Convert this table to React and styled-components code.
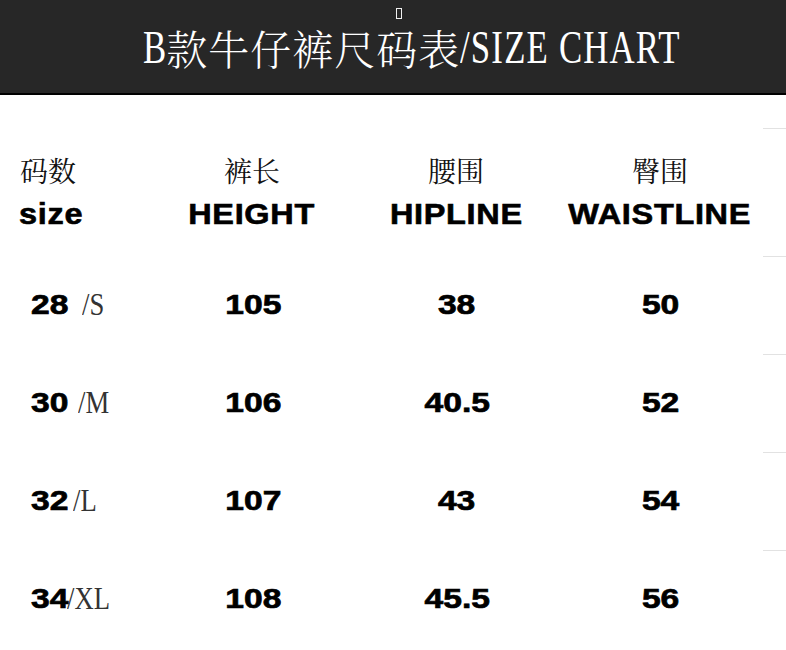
import React from "react";
import styled, { createGlobalStyle } from "styled-components";

const rows = [
    { size: "28", tag: "/S", shift: 20, height: "105", hip: "38", waist: "50" },
    { size: "30", tag: "/M", shift: 16, height: "106", hip: "40.5", waist: "52" },
    { size: "32", tag: "/L", shift: 11, height: "107", hip: "43", waist: "54" },
    { size: "34", tag: "/XL", shift: 5, height: "108", hip: "45.5", waist: "56" },
];

const heads = [
    { cn: "裤长", en: "HEIGHT" },
    { cn: "腰围", en: "HIPLINE" },
    { cn: "臀围", en: "WAISTLINE" },
];

const App = () => {
    return (
        <>
            <Global />
            <Banner>
                <Tofu />
                <Title>
                    <Latin $trim={8}>B</Latin>
                    <Han>款牛仔裤尺码表</Han>
                    <Latin $trim={75} $wide>/SIZE CHART</Latin>
                </Title>
            </Banner>
            <Chart>
                <HeadCell $left>
                    <CnLabel $pad={20}>码数</CnLabel>
                    <EnLabel $left>size</EnLabel>
                </HeadCell>
                {heads.map((h) => (
                    <HeadCell key={h.en}>
                        <CnLabel>{h.cn}</CnLabel>
                        <EnLabel>{h.en}</EnLabel>
                    </HeadCell>
                ))}
                <Tick />

                {rows.map((r) => (
                    <React.Fragment key={r.size}>
                        <Cell $left>
                            <Num $left>{r.size}</Num>
                            <SizeTag $shift={r.shift}>{r.tag}</SizeTag>
                        </Cell>
                        <Cell><Num>{r.height}</Num></Cell>
                        <Cell><Num>{r.hip}</Num></Cell>
                        <Cell><Num>{r.waist}</Num></Cell>
                        <Tick />
                    </React.Fragment>
                ))}
            </Chart>
        </>
    );
};

const Global = createGlobalStyle`
    body{
        margin: 0;
        background: #ffffff;
        font-family: "Liberation Sans", "Noto Sans CJK SC", sans-serif;
    }
`;

const Banner = styled.header`
    position: relative;
    height: 93px;
    background: #272727;
    border-bottom: 2px solid #000;
    display: flex;
    align-items: center;
    padding-left: 143px;
    box-sizing: content-box;
`;

const Tofu = styled.span`
    position: absolute;
    left: 396px;
    top: 8px;
    width: 4px;
    height: 9px;
    border: 1px solid #f0f0f0;
`;

const Title = styled.h1`
    margin: 0;
    display: flex;
    align-items: center;
    font-weight: 400;
    color: #ffffff;
    white-space: nowrap;
`;

const Latin = styled.span`
    display: inline-block;
    font-family: "Liberation Serif", serif;
    font-size: 47px;
    line-height: 48px;
    letter-spacing: ${(p) => (p.$wide ? "1.6px" : "0")};
    transform: scaleX(0.74);
    transform-origin: left center;
    margin-right: -${(p) => p.$trim}px;
`;

const Han = styled.span`
    font-family: "Noto Serif CJK SC", "Noto Sans CJK SC", serif;
    font-size: 41px;
    line-height: 48px;
    letter-spacing: 1px;
    font-weight: 300;
    margin-top: 2px;
`;

const Chart = styled.main`
    display: grid;
    grid-template-columns: 150px 204px 204px 204px 1fr;
    grid-template-rows: 128px repeat(4, 98px);
    margin-top: 33px;
`;

const HeadCell = styled.div`
    display: flex;
    flex-direction: column;
    align-items: ${(p) => (p.$left ? "flex-start" : "center")};
    padding-top: 24px;
    gap: 8px;
`;

const CnLabel = styled.div`
    font-family: "Noto Serif CJK SC", "Noto Sans CJK SC", serif;
    font-size: 28px;
    line-height: 36px;
    color: #111;
    padding-left: ${(p) => (p.$pad ? `${p.$pad}px` : "0")};
`;

const EnLabel = styled.div`
    font-family: "Liberation Sans", Arial, sans-serif;
    font-weight: 700;
    font-size: 29px;
    line-height: 36px;
    letter-spacing: 0.6px;
    color: #000;
    -webkit-text-stroke: 0.6px #000;
    transform: scaleX(1.12);
    transform-origin: ${(p) => (p.$left ? "left" : "center")} center;
    padding-left: ${(p) => (p.$left ? "17px" : "0")};
`;

const Cell = styled.div`
    display: flex;
    align-items: center;
    justify-content: ${(p) => (p.$left ? "flex-start" : "center")};
    padding-left: ${(p) => (p.$left ? "31px" : "2px")};
`;

const Num = styled.span`
    display: inline-block;
    font-family: "Liberation Sans", Arial, sans-serif;
    font-weight: 700;
    font-size: 28px;
    color: #000;
    -webkit-text-stroke: 0.7px #000;
    transform: scaleX(1.2);
    transform-origin: ${(p) => (p.$left ? "left" : "center")} center;
`;

const SizeTag = styled.span`
    display: inline-block;
    margin-left: ${(p) => p.$shift}px;
    font-family: "Liberation Serif", serif;
    font-size: 31px;
    color: #333;
    transform: scaleX(0.86);
    transform-origin: left center;
`;

const Tick = styled.div`
    border-top: 1px solid #e2e2e2;
    margin-left: 1px;
`;

export default App;
